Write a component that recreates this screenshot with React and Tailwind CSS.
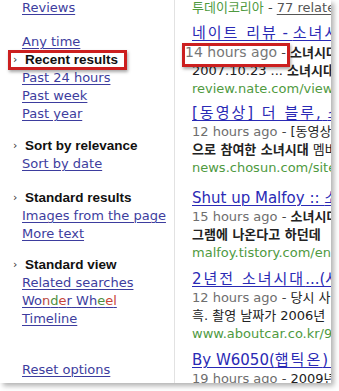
const link = 'text-[#3d3d9e] underline underline-offset-2 decoration-1'

const Header = ({ children, boxed }) => (
  <div className="relative -ml-[9px] flex text-[#111]">
    <span className="w-[12px] text-[11px] text-[#333]">›</span>
    <span className="font-['Liberation_Sans',sans-serif] text-[13.5px] font-bold">{children}</span>
    {boxed && (
      <span className="absolute -left-[5px] -top-[1px] h-[20px] w-[119px] border-[3px] border-[#cc1f1f] shadow-[1px_2px_3px_rgba(0,0,0,0.35)]" />
    )}
  </div>
)

const Link = ({ children }) => (
  <div>
    <span className={link}>{children}</span>
  </div>
)

const Ko = ({ children }) => <span className="tracking-[2px]">{children}</span>

const wheel = [
  ['W', '#3d3d9e'], ['o', '#3d3d9e'], ['n', '#b8483e'], ['d', '#4f8f3f'], ['e', '#c9453a'], ['r', '#3d3d9e'],
  [' ', '#3d3d9e'],
  ['W', '#3d3d9e'], ['h', '#3d3d9e'], ['e', '#4f8f3f'], ['e', '#c9453a'], ['l', '#c9453a'],
]

const results = [
  {
    title: <><Ko>네이트 리뷰</Ko> - <Ko>소녀시대 리뷰</Ko></>,
    date: '14 hours ago',
    boxed: true,
    snip: [<b key="a">소녀시대 데뷔 무대</b>, <span key="b">2007.10.23 ... <b>소녀시대</b> 다시 만난 세계</span>],
    url: 'review.nate.com/view/review',
    mb: 'mb-[5px]',
  },
  {
    title: <><Ko>[동영상] 더 블루,</Ko> <Ko>소녀시대</Ko></>,
    date: '12 hours ago',
    snip: [<span key="a">[동영상] 더 블루</span>, <span key="b"><b>으로 참여한 소녀시대</b> 멤버</span>],
    url: 'news.chosun.com/site/data',
    mb: 'mb-[11px]',
  },
  {
    title: <>Shut up Malfoy :: <Ko>소녀시대</Ko></>,
    date: '15 hours ago',
    snip: [<b key="a">소녀시대 스타킹</b>, <b key="b">그램에 나온다고 하던데</b>],
    url: 'malfoy.tistory.com/entry',
    mb: 'mb-[7px]',
  },
  {
    title: <><Ko>2년전 소녀시대</Ko>...(사진)</>,
    date: '12 hours ago',
    snip: [<span key="a">당시 사진</span>, <span key="b">흑. 촬영 날짜가 2006년</span>],
    url: 'www.aboutcar.co.kr/9999',
    mb: 'mb-[7px]',
  },
  {
    title: <>By W6050(<Ko>햅틱온</Ko>) 소녀</>,
    date: '19 hours ago',
    snip: [<span key="a">2009년</span>],
    url: '',
    mb: '',
  },
]

const Result = ({ r }) => (
  <div className={r.mb}>
    <div className="text-[15px] leading-[20px]">
      <span className="text-[#2a2ab5] underline underline-offset-2 decoration-1">{r.title}</span>
    </div>
    <div className="leading-[18px] text-[#222]">
      {r.boxed ? (
        <span className="relative -ml-[7px] inline-block text-[14px] text-[#777]">
          {r.date}
          <span className="absolute -left-[3px] top-0 h-[24px] w-[108px] border-[3px] border-[#cc1f1f] shadow-[1px_2px_3px_rgba(0,0,0,0.35)]" />
        </span>
      ) : (
        <span className="text-[#6e6e6e]">{r.date}</span>
      )}
      <span className="text-[#444]"> - </span>
      {r.snip[0]}
    </div>
    {r.snip[1] && <div className="leading-[18px] text-[#222]">{r.snip[1]}</div>}
    {r.url && <div className="leading-[18px] text-[#4f9a3f]">{r.url}</div>}
  </div>
)

export default function App() {
  return (
    <div className="h-[391px] w-[339px] overflow-hidden bg-white font-['DejaVu_Sans','Noto_Sans_CJK_KR',sans-serif] text-[13px]">
      <div className="flex h-[383px] w-[331px] overflow-hidden bg-white shadow-[3px_3px_5px_rgba(0,0,0,0.3)]">
        <div className="-mt-[1px] w-[175px] shrink-0 border-r border-[#e2e2e2] pl-[22px] leading-[18px]">
          <Link>Reviews</Link>
          <div className="mt-[16px]">
            <Link>Any time</Link>
            <Header boxed>Recent results</Header>
            <Link>Past 24 hours</Link>
            <Link>Past week</Link>
            <Link>Past year</Link>
          </div>
          <div className="mt-[14px]">
            <Header>Sort by relevance</Header>
            <Link>Sort by date</Link>
          </div>
          <div className="mt-[16px]">
            <Header>Standard results</Header>
            <Link>Images from the page</Link>
            <Link>More text</Link>
          </div>
          <div className="mt-[13px]">
            <Header>Standard view</Header>
            <Link>Related searches</Link>
            <div>
              <span className="underline underline-offset-2 decoration-1 decoration-[#3d3d9e]">
                {wheel.map(([c, col], i) => (
                  <span key={i} style={{ color: col }}>{c}</span>
                ))}
              </span>
            </div>
            <Link>Timeline</Link>
          </div>
          <div className="mt-[33px]">
            <Link>Reset options</Link>
          </div>
        </div>
        <div className="-mt-[1px] min-w-0 flex-1 overflow-hidden whitespace-nowrap pl-[17px]">
          <div className="mb-[6px] leading-[18px]">
            <span className="text-[#4f9a3f]">투데이코리아</span>
            <span className="text-[#444]"> - </span>
            <span className="text-[#555] underline underline-offset-2">77 related articles</span>
          </div>
          {results.map((r, i) => (
            <Result key={i} r={r} />
          ))}
        </div>
      </div>
    </div>
  )
}
